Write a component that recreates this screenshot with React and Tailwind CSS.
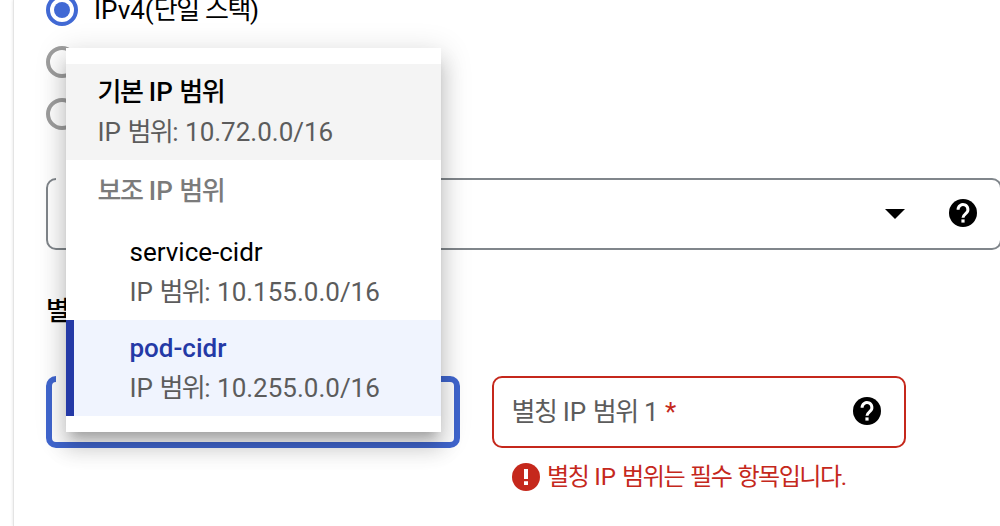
import React, { useState } from 'react';
import { clsx } from 'clsx';

const ipModes = ['IPv4(단일 스택)', '', ''];

const secondaryRanges = [
    { name: 'service-cidr', range: '10.155.0.0/16' },
    { name: 'pod-cidr', range: '10.255.0.0/16' },
];

// Hangul runs are set a little tighter than the Latin text around them
function Ko({ text }) {
    return text.split(/([\uac00-\ud7a3]+)/).map((part, i) =>
        /[\uac00-\ud7a3]/.test(part)
            ? <span key={i} className="tracking-[-1.5px]">{part}</span>
            : part
    );
}

function Radio({ checked }) {
    return (
        <span
            className={clsx(
                'flex size-8 shrink-0 items-center justify-center rounded-full border-4',
                checked ? 'border-[#4169d4]' : 'border-[#9e9e9e]'
            )}
        >
            {checked && <span className="size-4 rounded-full bg-[#4169d4]" />}
        </span>
    );
}

function HelpIcon() {
    return (
        <svg viewBox="0 0 28 28" className="size-7 shrink-0">
            <circle cx="14" cy="14" r="14" fill="#000" />
            <path d="M9.1 10.7a4.9 4.9 0 1 1 8.1 3.5c-1.9 1.6-3.2 2.3-3.2 4.6" fill="none" stroke="#fff" strokeWidth="3" />
            <path d="M12.4 20.4h3.2v3.2h-3.2z" fill="#fff" />
        </svg>
    );
}

function ErrorIcon() {
    return (
        <svg viewBox="0 0 28 28" className="size-7 shrink-0">
            <circle cx="14" cy="14" r="14" fill="#c5281c" />
            <path d="M12 6h4v10h-4zM12 18.2h4V22h-4z" fill="#fff" />
        </svg>
    );
}

function RangeMenu({ selected, onSelect }) {
    return (
        <div className="absolute left-[66px] top-12 z-10 w-[375px] bg-white py-4 shadow-[0_10px_10px_-6px_rgba(0,0,0,0.2),0_16px_20px_2px_rgba(0,0,0,0.14),0_6px_28px_4px_rgba(0,0,0,0.12)]">
            <div className="h-24 bg-[#f4f4f4] pl-[31.5px] pt-2">
                <div className="h-10 font-medium leading-10 text-black"><Ko text="기본 IP 범위" /></div>
                <div className="h-10 leading-10 text-[#5c5c5c]"><Ko text="IP 범위: 10.72.0.0/16" /></div>
            </div>
            <div className="h-16 pl-[31.5px] font-medium leading-[62px] text-[#7b7b7b]"><Ko text="보조 IP 범위" /></div>
            {secondaryRanges.map(({ name, range }) => (
                <div
                    key={name}
                    onClick={() => onSelect(name)}
                    className={clsx(
                        'h-24 border-l-8 pl-[55.5px] pt-2',
                        selected === name ? 'border-[#2439a6] bg-[#f0f4fe]' : 'border-white'
                    )}
                >
                    <div className={clsx('h-10 leading-10', selected === name ? 'font-medium text-[#2439a6]' : 'text-black')}>
                        {name}
                    </div>
                    <div className="h-10 leading-10 text-[#5c5c5c]"><Ko text={`IP 범위: ${range}`} /></div>
                </div>
            ))}
        </div>
    );
}

function App() {
    const [mode, setMode] = useState(0);
    const [selected, setSelected] = useState('pod-cidr');

    return (
        <div className="relative h-[526px] w-[1000px] overflow-hidden bg-white pl-[13px] font-['Roboto','Noto_Sans_CJK_KR',sans-serif] text-[26px] text-black">
            <div className="flow-root h-full border-l border-[#e4e4e4] pl-8 shadow-[0_0_3px_rgba(0,0,0,0.12)]">
                {/* Stack type */}
                <div className="-mt-1.5 flex flex-col gap-5">
                    {ipModes.map((label, i) => (
                        <div key={i} className="flex h-8 items-center gap-4" onClick={() => setMode(i)}>
                            <Radio checked={mode === i} />
                            {label && <span className="leading-8"><Ko text={label} /></span>}
                        </div>
                    ))}
                </div>

                {/* Subnet */}
                <div className="relative mt-12 flex h-[72px] w-[956px] items-center justify-end gap-11 rounded-[10px] border-2 border-[#80868b] pr-[23px]">
                    <span className="absolute -top-0.5 left-2 h-0.5 w-40 bg-white" />
                    <svg viewBox="0 0 20 10" className="h-2.5 w-5"><path d="M0 0h20L10 10z" /></svg>
                    <span className="pb-0.5"><HelpIcon /></span>
                </div>

                <h2 className="mt-[41px] h-10 font-medium leading-10"><Ko text="별" /></h2>

                {/* Alias ranges */}
                <div className="mt-[45px] flex gap-8">
                    <div className="relative h-[72px] w-[414px] rounded-[10px] border-[6px] border-[#4066cf]">
                        <span className="absolute -top-1.5 left-1 h-1.5 w-40 bg-white" />
                    </div>
                    <div className="w-[414px]">
                        <div className="flex h-[72px] items-center justify-between rounded-[10px] border-2 border-[#c5281c] pb-0.5 pl-[17.5px] pr-[23px] text-[#5c5c5c]">
                            <span className="pt-px leading-10"><Ko text="별칭 IP 범위 1 " /><span className="text-[#c5281c]">*</span></span>
                            <HelpIcon />
                        </div>
                        <div className="mt-[9px] flex h-10 items-center gap-[7px] pl-5 text-[24.1px] leading-10 text-[#c5281c]">
                            <ErrorIcon />
                            <span className="whitespace-nowrap"><Ko text="별칭 IP 범위는 필수 항목입니다." /></span>
                        </div>
                    </div>
                </div>
            </div>

            <RangeMenu selected={selected} onSelect={setSelected} />
        </div>
    );
}

export default App;
